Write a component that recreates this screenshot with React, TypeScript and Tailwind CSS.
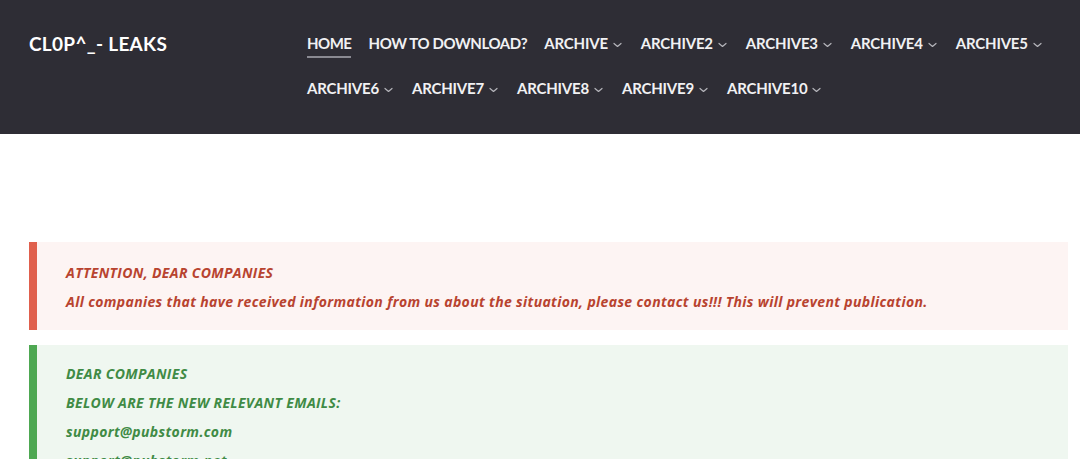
import React from "react";

const topRow = ["ARCHIVE", "ARCHIVE2", "ARCHIVE3", "ARCHIVE4", "ARCHIVE5"];
const bottomRow = ["ARCHIVE6", "ARCHIVE7", "ARCHIVE8", "ARCHIVE9", "ARCHIVE10"];

const Caret = () => (
  <svg width="9" height="6" viewBox="0 0 9 6" className="ml-[5px] mt-[2px]" fill="none">
    <path d="M1 1.5l3.5 3 3.5-3" stroke="#b5b5bb" strokeWidth="1.2" strokeLinecap="round" strokeLinejoin="round" />
  </svg>
);

const NavItem = ({ label, drop }: { label: string; drop?: boolean }) => (
  <a className="flex items-center text-[15px] font-bold text-[#f1f1f3] tracking-[-0.2px] whitespace-nowrap">
    {label}
    {drop && <Caret />}
  </a>
);

export default function App() {
  return (
    <div className="min-h-[459px] bg-white" style={{ fontFamily: "Lato, 'Liberation Sans', sans-serif" }}>
      <header className="h-[134px] bg-[#2e2d35] flex pl-[29px]">
        <div className="pt-[30px] w-[278px] text-[19px] font-bold text-white tracking-[0.3px]">CL0P^_- LEAKS</div>
        <nav className="pt-[34px] flex flex-col gap-[26px]">
          <div className="flex gap-[17px] items-center h-[19px]">
            <a className="relative text-[15px] font-bold text-[#f1f1f3] tracking-[-0.5px]">
              HOME
              <span className="absolute left-0 right-0 top-[24px] h-[2px] bg-[#8a8a92]" />
            </a>
            <a className="text-[15px] font-bold text-[#f1f1f3] tracking-[-0.4px] whitespace-nowrap">HOW TO DOWNLOAD?</a>
            <div className="flex gap-[19px] items-center">
              {topRow.map((l) => (
                <NavItem key={l} label={l} drop />
              ))}
            </div>
          </div>
          <div className="flex gap-[19px] items-center h-[19px]">
            {bottomRow.map((l) => (
              <NavItem key={l} label={l} drop />
            ))}
          </div>
        </nav>
      </header>

      <main className="pt-[108px] px-[29px] pr-[12px] flex flex-col gap-[15px] italic font-bold text-[14px]" style={{ fontFamily: "'Open Sans', Lato, sans-serif" }}>
        <div className="bg-[#fdf4f3] border-l-[8px] border-[#e0604d] pl-[29px] pt-[21px] pb-[19px] text-[#b8432f] flex flex-col gap-[10px] leading-[19px] tracking-[0.35px]">
          <p>ATTENTION, DEAR COMPANIES</p>
          <p>All companies that have received information from us about the situation, please contact us!!! This will prevent publication.</p>
        </div>
        <div className="bg-[#eff7f0] border-l-[8px] border-[#4ea852] pl-[29px] pt-[19px] pb-[20px] text-[#3f8b45] flex flex-col gap-[10px] leading-[19px] tracking-[0.35px]">
          <p>DEAR COMPANIES</p>
          <p>BELOW ARE THE NEW RELEVANT EMAILS:</p>
          <p>support@pubstorm.com</p>
          <p>support@pubstorm.net</p>
        </div>
      </main>
    </div>
  );
}
